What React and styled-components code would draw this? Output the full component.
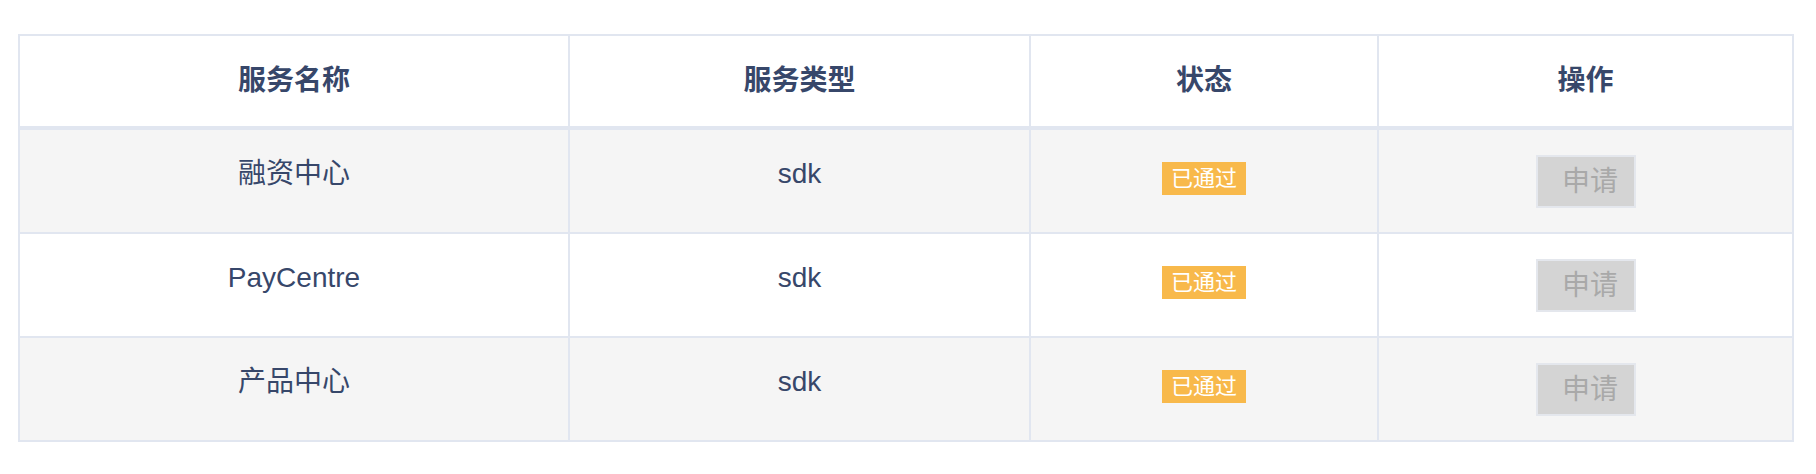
import React from 'react'
import styled, { createGlobalStyle } from 'styled-components'

const GlobalStyle = createGlobalStyle`
  body {
    margin: 0;
    background: #fff;
    font-family: "Liberation Sans", "Noto Sans CJK SC", sans-serif;
  }
`

const LINE = '#e1e6f0'
// track widths include each cell's 2px right border
const COLS = '550px 461px 348px 413px'

const Page = styled.div`
  padding: 34px 0 0 18px;
`

const Table = styled.div`
  width: 1776px;
  box-sizing: border-box;
  border: 2px solid ${LINE};
  color: #37476a;
`

const Row = styled.div`
  display: grid;
  grid-template-columns: ${COLS};
  background: ${(props) => (props.$striped ? '#f5f5f5' : '#fff')};
  border-bottom: ${(props) => (props.$head ? '4px' : '2px')} solid ${LINE};
  &:last-child {
    border-bottom: none;
  }
`

const HeadCell = styled.div`
  height: 90px;
  display: flex;
  align-items: center;
  justify-content: center;
  font-size: 28px;
  font-weight: 700;
  line-height: 40px;
  border-right: 2px solid ${LINE};
  &:last-child {
    border-right: none;
  }
`

const Cell = styled.div`
  height: 102px;
  box-sizing: border-box;
  display: flex;
  align-items: center;
  justify-content: center;
  font-size: 28px;
  line-height: 40px;
  padding-bottom: ${(props) => (props.$lift || 0) * 2}px;
  border-right: 2px solid ${LINE};
  &:last-child {
    border-right: none;
  }
`

const Badge = styled.span`
  display: inline-block;
  height: 33px;
  line-height: 33px;
  padding: 0 8.5px;
  background: #f8b94b;
  color: #fff;
  font-size: 22px;
`

const ApplyButton = styled.button`
  width: 100px;
  height: 53px;
  box-sizing: border-box;
  padding: 0 0 0 9px;
  border: 2px solid #e4e7ed;
  background: #d4d4d4;
  color: #a9a9a9;
  font-family: inherit;
  font-size: 28px;
  line-height: 49px;
  cursor: not-allowed;
`

const services = [
  { name: '融资中心', type: 'sdk', status: '已通过' },
  { name: 'PayCentre', type: 'sdk', status: '已通过' },
  { name: '产品中心', type: 'sdk', status: '已通过' },
]

export default function App() {
  return (
    <Page>
      <GlobalStyle />
      <Table>
        <Row $head>
          <HeadCell>服务名称</HeadCell>
          <HeadCell>服务类型</HeadCell>
          <HeadCell>状态</HeadCell>
          <HeadCell>操作</HeadCell>
        </Row>
        {services.map((s, i) => (
          <Row key={s.name} $striped={i % 2 === 0}>
            <Cell $lift={7}>{s.name}</Cell>
            <Cell $lift={7}>{s.type}</Cell>
            <Cell $lift={3}>
              <Badge>{s.status}</Badge>
            </Cell>
            <Cell>
              <ApplyButton disabled>申请</ApplyButton>
            </Cell>
          </Row>
        ))}
      </Table>
    </Page>
  )
}
